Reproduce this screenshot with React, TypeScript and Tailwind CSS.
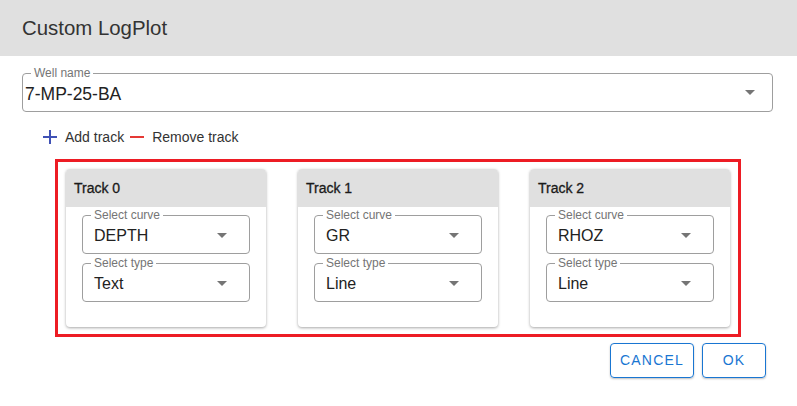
import React from 'react'

function Caret() {
  return (
    <svg width="10" height="5" viewBox="0 0 10 5">
      <path d="M0 0l5 5 5-5z" fill="#757575" />
    </svg>
  )
}

function OutlinedSelect({ label, value }: { label: string; value: string }) {
  return (
    <div className="relative h-[39px] rounded border border-[#9e9e9e] flex items-center justify-between pl-[11px] pr-[18px]">
      <span className="absolute -top-[8px] left-[8px] bg-white px-[3px] text-[12px] leading-[14px] text-[#757575]">
        {label}
      </span>
      <span className="text-[16px] text-[#222] pt-[3px]">{value}</span>
      <div className="mr-[4px] pt-[2px]">
        <Caret />
      </div>
    </div>
  )
}

const tracks = [
  { name: 'Track 0', curve: 'DEPTH', type: 'Text' },
  { name: 'Track 1', curve: 'GR', type: 'Line' },
  { name: 'Track 2', curve: 'RHOZ', type: 'Line' },
]

export default function App() {
  return (
    <div className="w-[797px] h-[406px] bg-white overflow-hidden" style={{ fontFamily: '"Liberation Sans", Arial, sans-serif' }}>
      {/* header */}
      <div className="h-[56px] bg-[#e0e0e0] px-[22px] flex items-center text-[20.4px] text-[#333]">
        Custom LogPlot
      </div>

      <div className="pt-[17px] pl-[22px] pr-[24px]">
        {/* well name */}
        <div className="relative h-[39px] rounded border border-[#9e9e9e] flex items-center justify-between pl-[2px] pr-[17px]">
          <span className="absolute -top-[8px] left-[8px] bg-white px-[3px] text-[12px] leading-[14px] text-[#757575]">
            Well name
          </span>
          <span className="text-[17.5px] text-[#222] pt-[4px]">7-MP-25-BA</span>
          <Caret />
        </div>

        {/* add / remove */}
        <div className="mt-[15px] ml-[21px] h-[20px] flex items-center text-[14px] text-[#333]">
          <svg width="14" height="14" viewBox="0 0 14 14">
            <path d="M7 0v14M0 7h14" stroke="#3f51b5" strokeWidth="2" />
          </svg>
          <span className="ml-[8px]">Add track</span>
          <svg width="14" height="14" viewBox="0 0 14 14" className="ml-[6px]">
            <path d="M0 7h14" stroke="#e53935" strokeWidth="2" />
          </svg>
          <span className="ml-[8px]">Remove track</span>
        </div>

        {/* tracks */}
        <div className="mt-[12px] ml-[33px] w-[686px] border-[3px] border-[#ed1c24] px-[8px] py-[7px] flex gap-[32px]">
          {tracks.map((t) => (
            <div key={t.name} className="w-[200px] rounded bg-white shadow-[0_1px_3px_rgba(0,0,0,0.35)] overflow-hidden">
              <div className="h-[38px] bg-[#e0e0e0] px-[8px] flex items-center text-[14px] text-[#1a1a1a] [-webkit-text-stroke:0.3px_#1a1a1a]">
                {t.name}
              </div>
              <div className="px-[16px] pt-[8px] pb-[25px] flex flex-col gap-[9px]">
                <OutlinedSelect label="Select curve" value={t.curve} />
                <OutlinedSelect label="Select type" value={t.type} />
              </div>
            </div>
          ))}
        </div>
      </div>

      {/* actions */}
      <div className="mt-[6px] pr-[31px] flex justify-end gap-[8px]">
        <button className="w-[84px] h-[35px] rounded border border-[#1976d2] text-[#1976d2] text-[14px] tracking-[1.2px] shadow-[0_1px_2px_rgba(0,0,0,0.25)]">
          CANCEL
        </button>
        <button className="w-[64px] h-[35px] rounded border border-[#1976d2] text-[#1976d2] text-[14px] tracking-[1.2px] shadow-[0_1px_2px_rgba(0,0,0,0.25)]">
          OK
        </button>
      </div>
    </div>
  )
}
